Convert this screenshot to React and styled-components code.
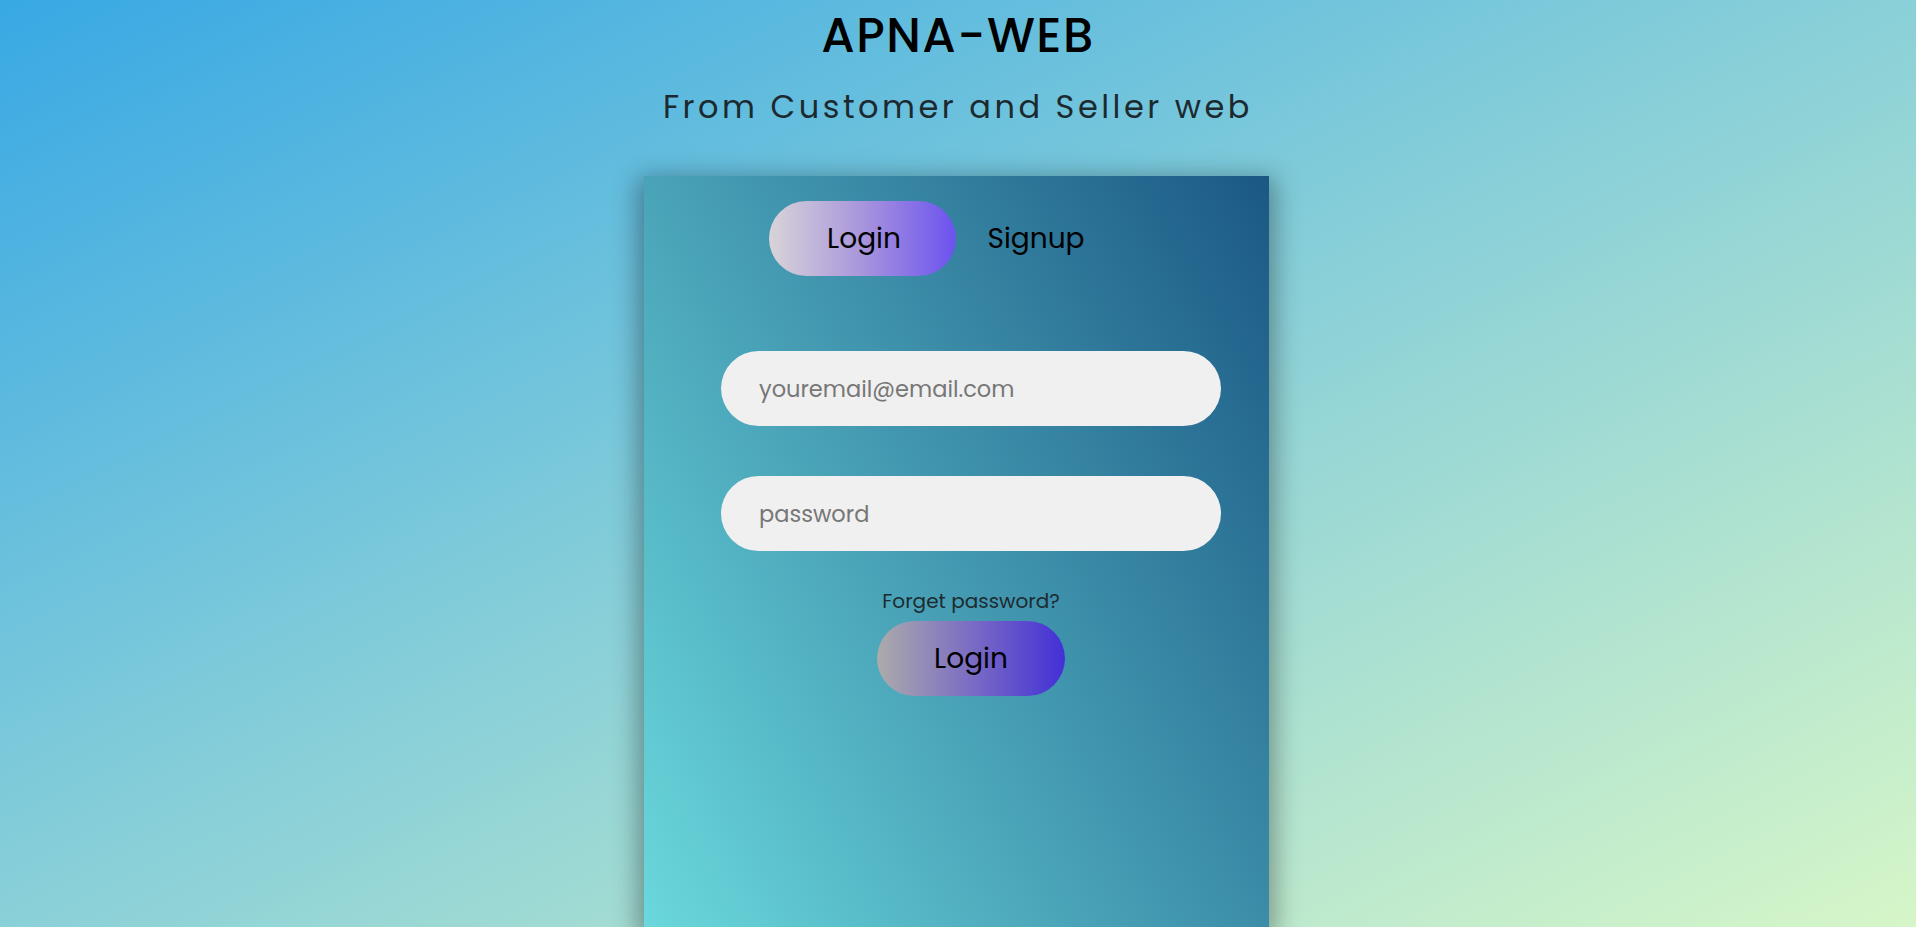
import React from "react";
import styled, { createGlobalStyle } from "styled-components";

const GlobalStyle = createGlobalStyle`
  html, body {
    margin: 0;
    padding: 0;
  }
  body {
    font-family: "Poppins", Inter, "Noto Sans", sans-serif;
    background: linear-gradient(to bottom right, #38a8e4 0%, #8ad0d8 50%, #d6f6c8 100%);
    min-height: 100vh;
    overflow: hidden;
  }
  * { box-sizing: border-box; }
`;

const Page = styled.div`
  display: flex;
  flex-direction: column;
  align-items: center;
  height: 927px;
  padding-top: 8px;
`;

const Title = styled.h1`
  margin: 0;
  font-size: 48px;
  line-height: 56px;
  font-weight: 500;
  letter-spacing: 1.5px;
  color: #000;
`;

const Subtitle = styled.h2`
  margin: 23px 0 0;
  font-size: 32px;
  line-height: 40px;
  font-weight: 400;
  letter-spacing: 3.5px;
  color: #1c2a30;
`;

const Card = styled.div`
  margin: 49px 4px 0 0;
  width: 625px;
  height: 751px;
  flex-shrink: 0;
  background: linear-gradient(60deg, #6ad8dc 0%, #1b5884 100%);
  box-shadow: 0 8px 24px 6px rgba(0, 0, 0, 0.35);
  display: flex;
  flex-direction: column;
`;

const ToggleRow = styled.div`
  display: flex;
  align-items: center;
  padding: 25px 0 0 125px;
`;

const ToggleButton = styled.button`
  height: 75px;
  border: none;
  border-radius: 38px;
  font-family: inherit;
  font-size: 28px;
  color: #000;
  cursor: pointer;
  padding: ${(p) => (p.$active ? "0 0 0 4px" : "0")};
  width: ${(p) => (p.$active ? "187px" : "auto")};
  margin-left: ${(p) => (p.$active ? "0" : "32px")};
  background: ${(p) =>
    p.$active
      ? "linear-gradient(to right, #d8d4d8 0%, #a895dc 50%, #6c52ef 100%)"
      : "transparent"};
`;

const Form = styled.form`
  display: flex;
  flex-direction: column;
  align-items: center;
  padding-left: 30px;
  margin-top: 75px;
`;

const Input = styled.input`
  width: 500px;
  height: 75px;
  border: none;
  outline: none;
  border-radius: 38px;
  background: #f0f0f0;
  padding: 0 0 0 38px;
  font-family: inherit;
  font-size: 22.5px;
  color: #333;
  margin-bottom: ${(p) => p.$mb || "0"};
  &::placeholder {
    color: #777;
  }
`;

const ForgetLink = styled.span`
  margin-top: 37px;
  font-size: 20px;
  line-height: 26px;
  color: #1d2b30;
`;

const SubmitButton = styled.button`
  margin-top: 7px;
  width: 188px;
  height: 75px;
  border: none;
  border-radius: 38px;
  font-family: inherit;
  font-size: 28px;
  color: #000;
  cursor: pointer;
  background: linear-gradient(to right, #acabab 0%, #7b6cc4 50%, #4230d6 100%);
`;

export default function App() {
  return (
    <>
      <GlobalStyle />
      <Page>
        <Title>APNA-WEB</Title>
        <Subtitle>From Customer and Seller web</Subtitle>
        <Card>
          <ToggleRow>
            <ToggleButton $active type="button">Login</ToggleButton>
            <ToggleButton type="button">Signup</ToggleButton>
          </ToggleRow>
          <Form onSubmit={(e) => e.preventDefault()}>
            <Input type="email" placeholder="youremail@email.com" $mb="50px" />
            <Input type="password" placeholder="password" />
            <ForgetLink>Forget password?</ForgetLink>
            <SubmitButton type="submit">Login</SubmitButton>
          </Form>
        </Card>
      </Page>
    </>
  );
}
